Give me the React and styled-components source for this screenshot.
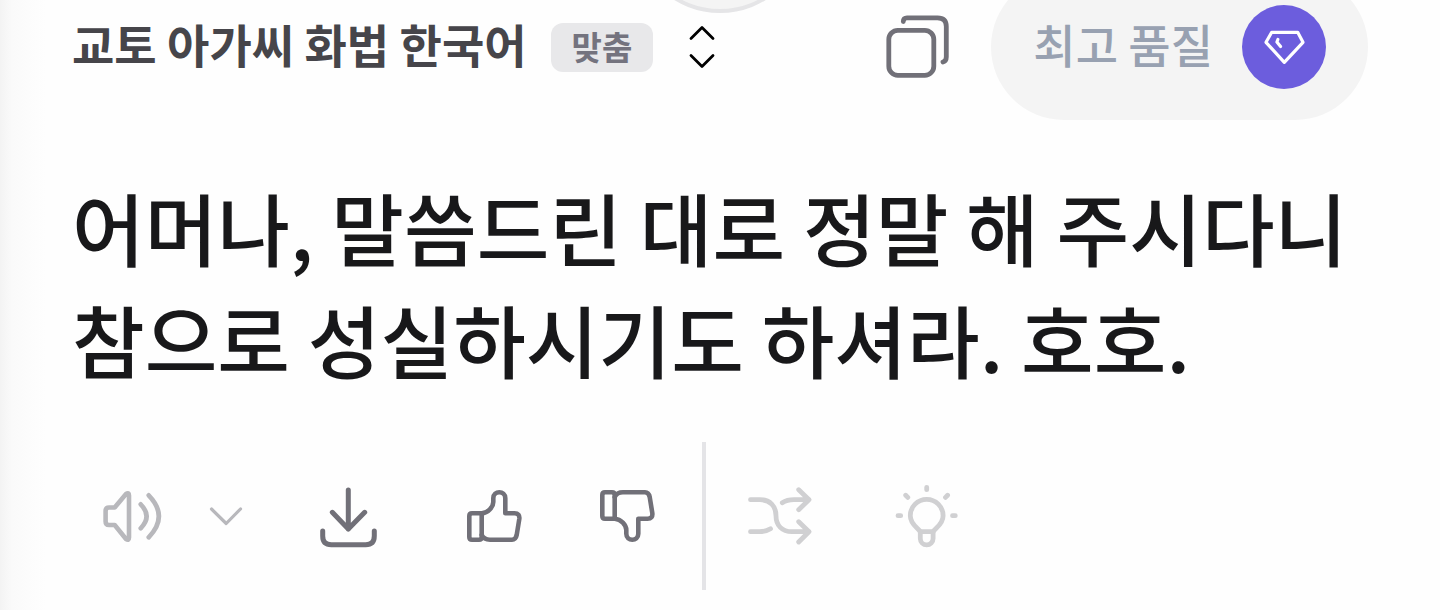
import React from "react";
import styled, { createGlobalStyle } from "styled-components";

const GlobalStyle = createGlobalStyle`
  * { box-sizing: border-box; }
  body {
    margin: 0;
    background: #fefefe;
    font-family: "Noto Sans CJK KR", "Noto Sans", sans-serif;
  }
  button {
    border: 0;
    padding: 0;
    background: none;
    color: inherit;
    font: inherit;
    cursor: pointer;
  }
`;

const Panel = styled.main`
  position: relative;
  min-height: 100vh;
  overflow: hidden;
  padding: 0 72px 20px;
  background: linear-gradient(to right, #f3f3f3 0, #fafafa 12px, #fcfcfc 28px, #fefefe 46px);
`;

const SwapButton = styled.button`
  position: absolute;
  top: -161px;
  left: 50%;
  width: 174px;
  height: 174px;
  margin-left: -87px;
  border: 4px solid #e5e5e7;
  border-radius: 50%;
  background: #f4f4f4;
`;

const Header = styled.header`
  display: flex;
  align-items: center;
  justify-content: space-between;
  height: 146px;
  margin-top: -26px;
`;

const StyleSelector = styled.button`
  display: flex;
  align-items: center;
  white-space: nowrap;
`;

const HeaderText = styled.span`
  padding-bottom: 8px;
  font-size: 46px;
  line-height: 56px;
`;

const StyleName = styled(HeaderText)`
  color: #46454a;
  font-weight: 700;
`;

const Badge = styled.span`
  margin: 0 35px 0 24px;
  padding: 0 21px 3px;
  border-radius: 12px;
  background: #e8e8ea;
  color: #74737e;
  font-size: 33px;
  font-weight: 700;
  line-height: 46px;
`;

const HeaderActions = styled.div`
  display: flex;
  align-items: center;
  gap: 41px;
`;

const QualityButton = styled.button`
  display: flex;
  align-items: center;
  gap: 29px;
  height: 146px;
  padding: 0 42px;
  border-radius: 73px;
  background: #f4f4f4;
  color: #98a1b1;
  font-weight: 500;
  white-space: nowrap;
`;

const GemDisc = styled.span`
  display: grid;
  place-items: center;
  width: 84px;
  height: 84px;
  border-radius: 50%;
  background: #6c5ddd;
  color: #fff;
`;

const Translation = styled.p`
  margin: 51px 0 47px;
  color: #18181a;
  font-size: 79px;
  font-weight: 500;
  line-height: 112px;
  word-break: keep-all;
`;

const Toolbar = styled.div`
  display: flex;
  align-items: center;
  gap: 42px;
  padding-left: 28px;
`;

const ToolGroup = styled.div`
  display: flex;
  align-items: center;
  gap: ${(p) => p.$gap}px;
`;

const IconButton = styled.button`
  display: flex;
  color: ${(p) => p.$tone || "#717078"};
`;

const Divider = styled.div`
  width: 4px;
  height: 148px;
  background: #e4e4e7;
`;

function Icon({ width = 64, height = 64, stroke = 5, children }) {
  return (
    <svg
      width={width}
      height={height}
      viewBox={`0 0 ${width} ${height}`}
      fill="none"
      stroke="currentColor"
      strokeWidth={stroke}
      strokeLinecap="round"
      strokeLinejoin="round"
      aria-hidden="true"
    >
      {children}
    </svg>
  );
}

function ThumbShape() {
  return (
    <>
      <path d="M18.7 29.3H9Q6.3 29.3 6.3 32V53Q6.3 55.7 9 55.7H16Q18.7 55.7 18.7 53Z" />
      <path d="M18.7 29.3C25 29 30.3 23 30.3 18V14.3C30.3 6.3 42.3 6.3 42.3 14.3V29.3H51.5Q57 29.3 56.3 35L53.7 51Q52.7 55.7 49 55.7H27Q21 55.7 18.7 51" />
    </>
  );
}

export default function App() {
  return (
    <>
      <GlobalStyle />
      <Panel>
        <Header>
          <StyleSelector type="button">
            <StyleName>교토 아가씨 화법 한국어</StyleName>
            <Badge>맞춤</Badge>
            <Icon width={28} height={48} stroke={2.8}>
              <path d="M3 15.5 14 4.5 25 15.5M3 32.5 14 43.5 25 32.5" />
            </Icon>
          </StyleSelector>
          <HeaderActions>
            <IconButton type="button" aria-label="복사">
              <Icon stroke={4.8}>
                <rect x="2.8" y="15.3" width="45" height="45" rx="9" />
                <path d="M17.3 6.5C17.3 4 18.5 2.8 21 2.8H51.5Q60.3 2.8 60.3 11.5V42Q60.3 46 57 47" />
              </Icon>
            </IconButton>
            <QualityButton type="button">
              <HeaderText>최고 품질</HeaderText>
              <GemDisc>
                <Icon width={48} height={48} stroke={3.2}>
                  <path d="M11.7 9.3H37.7L43 19.3 24.3 39.3 6 19.3Z" />
                  <path d="M17.9 16.5 16.9 19 20.6 23.5" />
                </Icon>
              </GemDisc>
            </QualityButton>
          </HeaderActions>
        </Header>

        <Translation>
          어머나, 말씀드린 대로 정말 해 주시다니 참으로 성실하시기도 하셔라. 호호.
        </Translation>

        <Toolbar>
          <ToolGroup $gap={82}>
            <ToolGroup $gap={73}>
              <ToolGroup $gap={44}>
                <IconButton type="button" aria-label="듣기" $tone="#b8b8bc">
                  <Icon stroke={4.6}>
                    <path d="M14.7 23.5 26 10Q29 8 29 11.5V53.5Q29 57 26 55L14.7 41H9Q5.6 41 5.6 37.5V27Q5.6 23.5 9 23.5Z" />
                    <path d="M40.7 20.3Q52.5 32.3 40.7 44.3M48.7 11.3Q69 32.3 48.7 53.3" />
                  </Icon>
                </IconButton>
                <IconButton type="button" aria-label="재생 옵션" $tone="#b8b8bc">
                  <Icon width={36} stroke={3.2}>
                    <path d="M3.5 25 18.2 39.5 32.5 25" />
                  </Icon>
                </IconButton>
              </ToolGroup>
              <IconButton type="button" aria-label="다운로드">
                <Icon>
                  <path d="M31.3 6V45M15.3 28.3 31.3 45 47.7 28.3M5.7 47V52Q5.7 60.7 14.3 60.7H48.7Q57.3 60.7 57.3 52V47" />
                </Icon>
              </IconButton>
            </ToolGroup>
            <ToolGroup $gap={69}>
              <IconButton type="button" aria-label="좋아요">
                <Icon stroke={4.6}>
                  <ThumbShape />
                </Icon>
              </IconButton>
              <IconButton type="button" aria-label="싫어요">
                <Icon stroke={4.6}>
                  <g transform="translate(0 64) scale(1 -1)">
                    <ThumbShape />
                  </g>
                </Icon>
              </IconButton>
            </ToolGroup>
          </ToolGroup>
          <Divider />
          <ToolGroup $gap={83}>
            <IconButton type="button" aria-label="다른 표현" $tone="#d0d0d2">
              <Icon stroke={4.8}>
                <path d="M2.5 15.7H12C22 15.7 28 22 28 31.7S34 47.7 44 47.7H61M50.7 37.7 61 47.7 50.7 58M50.7 5.7 61 15.7 50.7 25.7M61 15.7H46Q39 15.7 34.3 18.8M2.5 47.7H11.5Q18 47.7 22.5 44.8" />
              </Icon>
            </IconButton>
            <IconButton type="button" aria-label="설명" $tone="#d0d0d2">
              <Icon stroke={4.8}>
                <path d="M25.3 47.7C23 43.7 15.3 40.5 15.3 31.7A16.4 16.4 0 0 1 48.1 31.7C48.1 40.5 40.4 43.7 38.1 47.7Z" />
                <path d="M25.3 47.7V54.5A6.4 6.4 0 0 0 38.1 54.5V47.7M31.7 3.3V5.7M3 31.7H5.7M57.5 31.7H60.3M10.7 11.3 12.8 13.4M52.6 11.3 50.5 13.4" />
              </Icon>
            </IconButton>
          </ToolGroup>
        </Toolbar>
        <SwapButton type="button" aria-label="언어 바꾸기" />
      </Panel>
    </>
  );
}
